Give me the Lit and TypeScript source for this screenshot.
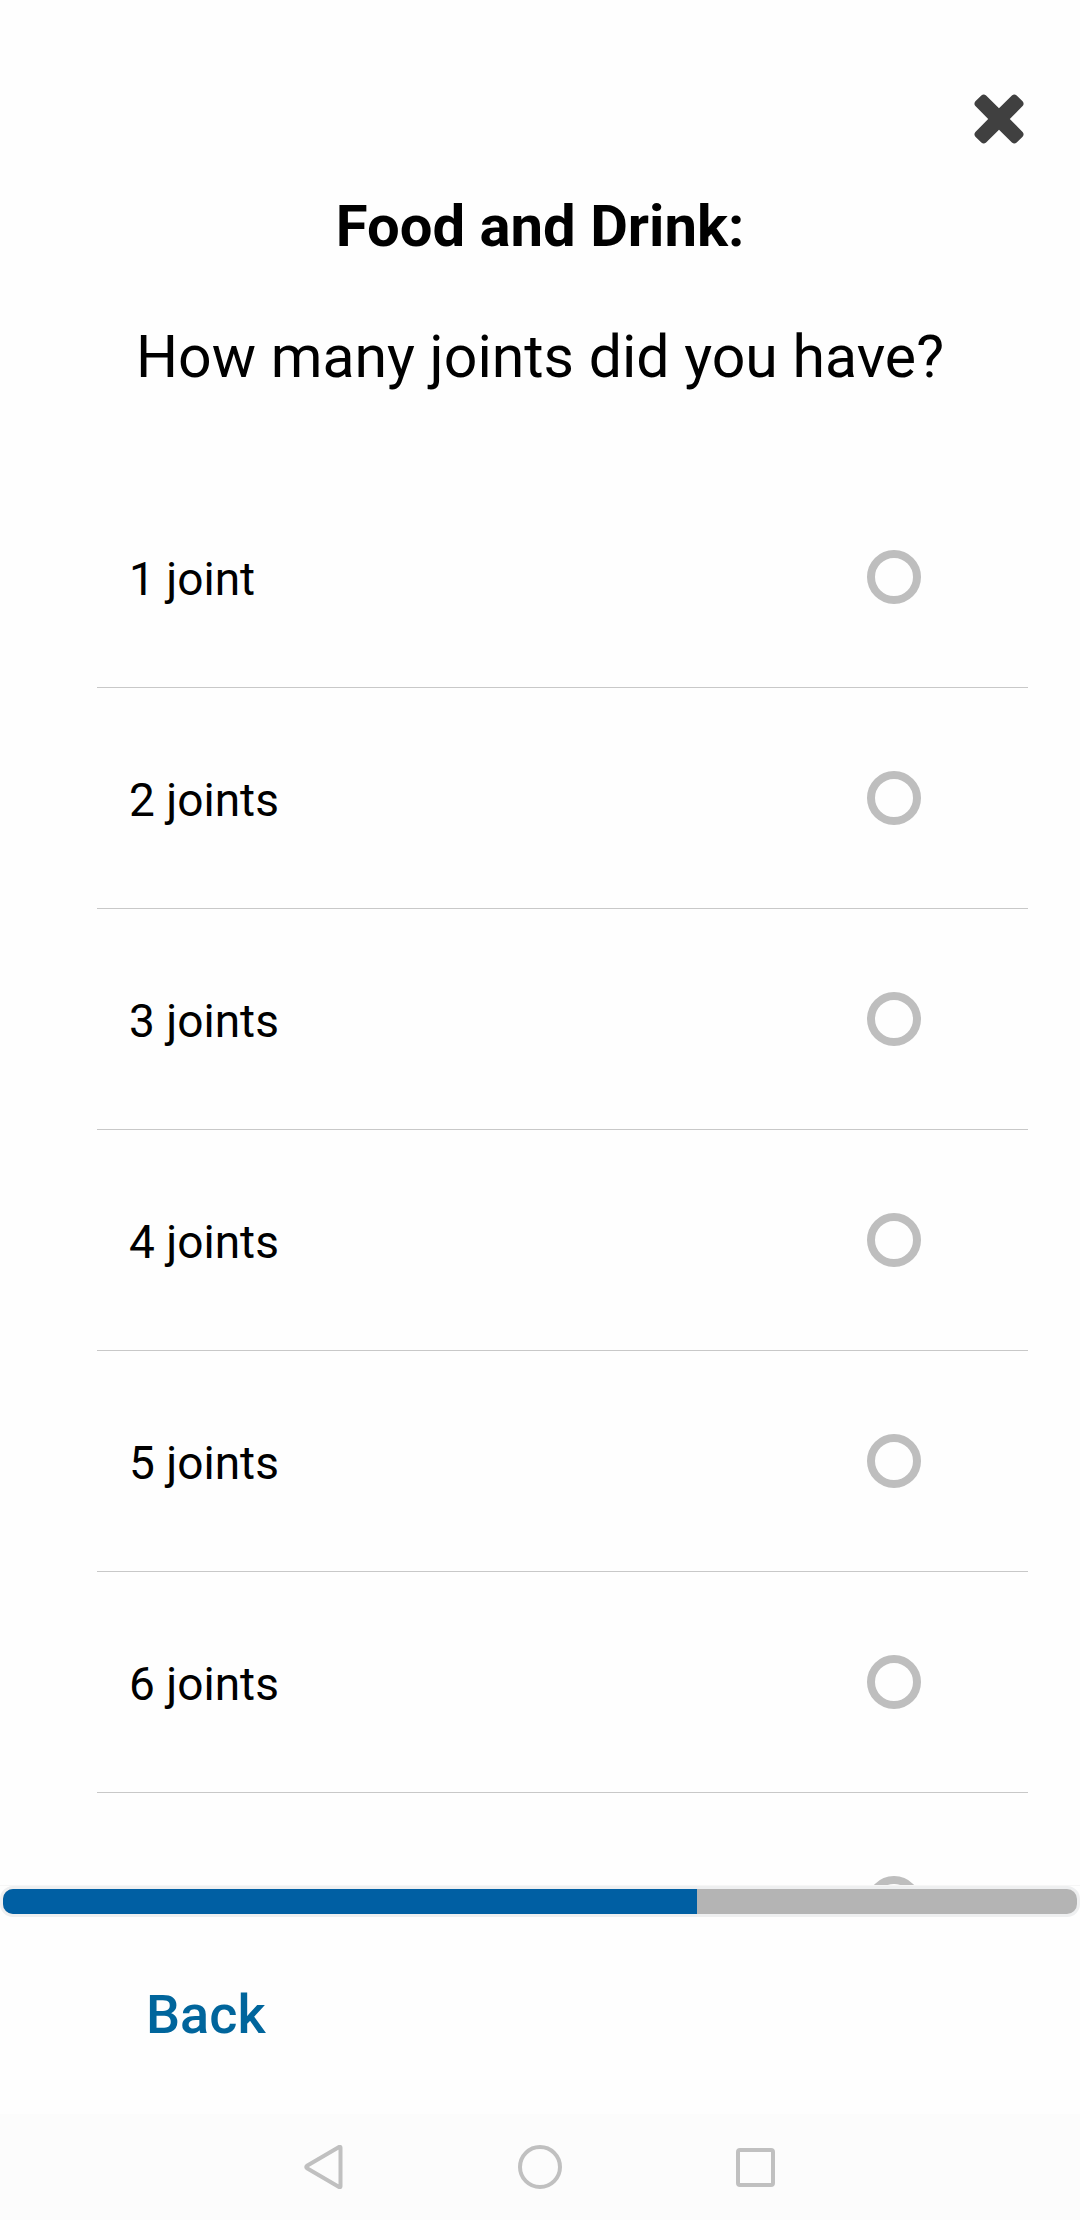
import { LitElement, html, css } from "lit";
import { customElement, property, state } from "lit/decorators.js";

@customElement("progress-bar")
class ProgressBar extends LitElement {
  @property({ type: Number }) value = 0;

  static styles = css`
    :host {
      display: block;
      border-top: 1px solid #f6f6f6;
    }
    .track {
      box-sizing: border-box;
      height: 31px;
      border: 3px solid #eeeff0;
      border-radius: 13px;
      background: #b4b4b4;
      overflow: hidden;
    }
    .fill {
      height: 100%;
      background: #005fa3;
    }
  `;

  render() {
    return html`<div
      class="track"
      role="progressbar"
      aria-label="Survey progress"
      aria-valuemin="0"
      aria-valuemax="100"
      aria-valuenow=${this.value}
    >
      <div class="fill" style="width:${this.value}%"></div>
    </div>`;
  }
}

@customElement("app-root")
class AppRoot extends LitElement {
  @state() private selected = "";

  private options = [
    "1 joint",
    "2 joints",
    "3 joints",
    "4 joints",
    "5 joints",
    "6 joints",
    "7 joints",
  ];

  static styles = css`
    :host {
      display: flex;
      flex-direction: column;
      height: 100vh;
      background: #fefefe;
      color: #000;
      font-family: Roboto, "Liberation Sans", sans-serif;
    }
    button {
      padding: 0;
      border: 0;
      background: none;
      font: inherit;
      cursor: pointer;
    }
    svg {
      display: block;
    }
    .content {
      flex: 1;
      min-height: 0;
      display: flex;
      flex-direction: column;
      overflow: hidden;
    }
    .top {
      display: flex;
      justify-content: flex-end;
      padding: 94px 56px 0;
    }
    .title,
    .question {
      margin: 0;
      line-height: 68px;
      text-align: center;
    }
    .title {
      margin-top: 48px;
      font-size: 58px;
      font-weight: 700;
    }
    .question {
      margin-top: 63px;
      font-size: 59px;
      font-weight: 400;
    }
    .options {
      flex: 1;
      min-height: 0;
      margin: 76px 52px 0 97px;
      padding: 0;
      border: 0;
      overflow: hidden;
    }
    .option {
      box-sizing: border-box;
      height: 221px;
      display: flex;
      align-items: center;
      justify-content: space-between;
      padding: 0 107px 0 32px;
      border-bottom: 1px solid #c8c8c8;
      font-size: 46px;
      line-height: 54px;
      cursor: pointer;
    }
    .label {
      padding-top: 4px;
    }
    .radio {
      appearance: none;
      box-sizing: border-box;
      width: 54px;
      height: 54px;
      margin: 0;
      border: 8px solid #bebebe;
      border-radius: 50%;
    }
    .radio:checked {
      border-color: #005fa3;
    }
    .footer {
      box-sizing: border-box;
      height: 197px;
      display: flex;
      align-items: center;
      padding: 0 146px 2px;
    }
    .back {
      color: #00659c;
      font-size: 54px;
      line-height: 64px;
      font-weight: 500;
    }
    .nav {
      display: flex;
      justify-content: center;
      height: 106px;
      background: #fcfcfc;
    }
    .nav button {
      width: 20%;
      display: flex;
      align-items: center;
      justify-content: center;
    }
  `;

  render() {
    return html`
      <main class="content">
        <div class="top">
          <button aria-label="Close">
            <svg width="50" height="50" viewBox="0 0 50 50" fill="#404040">
              <path
                d="M1.400 7.300L7.300 1.400Q9.700 -.6 12.100 1.400L25 14.200L37.900 1.400Q40.300 -.6 42.700 1.400L48.600 7.300Q50.600 9.700 48.600 12.100L35.800 25L48.600 37.900Q50.600 40.300 48.600 42.700L42.700 48.600Q40.300 50.600 37.900 48.600L25 35.800L12.100 48.600Q9.700 50.600 7.300 48.600L1.400 42.700Q-.6 40.300 1.400 37.900L14.200 25L1.400 12.100Q-.6 9.700 1.400 7.300z"
              />
            </svg>
          </button>
        </div>
        <h1 class="title">Food and Drink:</h1>
        <h2 class="question" id="question">How many joints did you have?</h2>
        <fieldset class="options" aria-labelledby="question">
          ${this.options.map(
            (text, i) => html`
              <label class="option" for="option-${i}">
                <span class="label">${text}</span>
                <input
                  class="radio"
                  type="radio"
                  name="joints"
                  id="option-${i}"
                  .checked=${this.selected === text}
                  @change=${() => (this.selected = text)}
                />
              </label>
            `,
          )}
        </fieldset>
      </main>
      <progress-bar .value=${64.6}></progress-bar>
      <footer class="footer"><button class="back">Back</button></footer>
      <nav class="nav">
        <button aria-label="System back">
          <svg width="44" height="44" viewBox="0 0 44 44" fill="none" stroke="#c0c0c0" stroke-width="4" stroke-linejoin="round">
            <path d="M37.500 1.800Q38.500 1.500 38.500 2.800V41.200Q38.500 42.500 37.500 42.200L5 23.300Q3.500 22 5 20.700z" />
          </svg>
        </button>
        <button aria-label="Home">
          <svg width="44" height="44" viewBox="0 0 44 44" fill="none" stroke="#c0c0c0" stroke-width="4">
            <circle cx="22" cy="22" r="20" />
          </svg>
        </button>
        <button aria-label="Recent apps">
          <svg width="40" height="40" viewBox="0 0 40 40" fill="none" stroke="#c0c0c0" stroke-width="4">
            <rect x="2" y="3" width="35" height="35" rx="2" />
          </svg>
        </button>
      </nav>
    `;
  }
}
